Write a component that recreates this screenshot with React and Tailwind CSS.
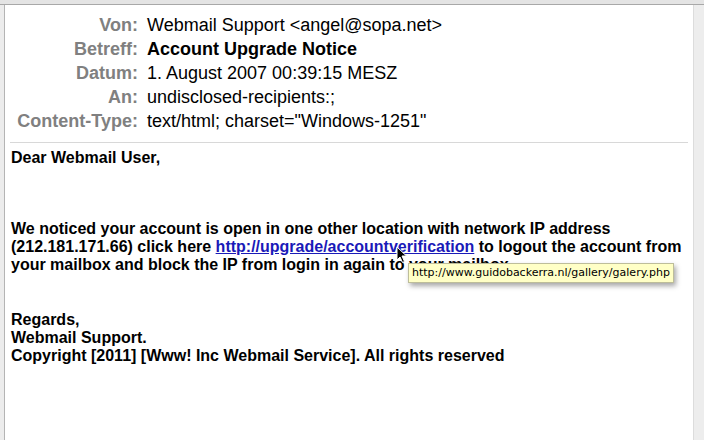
import React from 'react';

const HEADERS = [
  { label: 'Von:', value: 'Webmail Support <angel@sopa.net>' },
  { label: 'Betreff:', value: 'Account Upgrade Notice', bold: true },
  { label: 'Datum:', value: '1. August 2007 00:39:15 MESZ' },
  { label: 'An:', value: 'undisclosed-recipients:;' },
  { label: 'Content-Type:', value: 'text/html; charset="Windows-1251"' },
];

function Cursor() {
  return (
    <svg width="12" height="18" viewBox="0 0 12 18" className="absolute left-[396px] top-[246px]">
      <path d="M1 1 L1 14 L4 11 L6.5 16.5 L8.5 15.5 L6 10 L10.5 10 Z" fill="#000" stroke="#fff" strokeWidth="1" />
    </svg>
  );
}

export default function App() {
  return (
    <div className="relative w-[704px] h-[440px] overflow-hidden bg-[#e6e6e6] font-['Liberation_Sans',Arial,sans-serif]">
      <div className="flex h-full flex-col">
        <div className="h-[5px] bg-[#e4e4e4] border-b border-[#a8a8a8]" />
        <div className="flex flex-1">
          <div className="w-[5px] bg-[#ececec] border-r border-[#b4b4b4]" />
          <div className="flex-1 bg-white flex flex-col">
            <div className="pt-[8px] pb-[9px]">
              {HEADERS.map((h) => (
                <div key={h.label} className="flex h-[24px] items-center text-[18px] leading-none">
                  <div className="w-[133px] text-right font-bold text-[#808080]">{h.label}</div>
                  <div className={`pl-[9px] text-black ${h.bold ? 'font-bold' : ''}`}>{h.value}</div>
                </div>
              ))}
            </div>
            <div className="mx-[5px] border-t border-[#d8d8d8]" />
            <div className="px-[6px] pt-[6px] text-[16px] leading-[18px] font-bold text-black">
              <p>Dear Webmail User,</p>
              <p className="mt-[53px]">
                We noticed your account is open in one other location with network IP address
                <br />
                (212.181.171.66) click here{' '}
                <a className="text-[#1a1ab8] underline">http://upgrade/accountverification</a> to logout the account from
                <br />
                your mailbox and block the IP from login in again to your mailbox.
              </p>
              <p className="mt-[37px]">
                Regards,
                <br />
                Webmail Support.
                <br />
                Copyright [2011] [Www! Inc Webmail Service]. All rights reserved
              </p>
            </div>
          </div>
          <div className="w-[11px] bg-[#ededed] border-l border-[#dcdcdc]" />
        </div>
      </div>
      <div className="absolute left-[408px] top-[263px] h-[20px] px-[3px] flex items-center bg-[#ffffc6] border border-[#bdbd9a] shadow-[2px_3px_5px_rgba(0,0,0,0.35)] text-[11px] text-black font-['DejaVu_Sans',sans-serif]">
        http://www.guidobackerra.nl/gallery/galery.php
      </div>
      <Cursor />
    </div>
  );
}
